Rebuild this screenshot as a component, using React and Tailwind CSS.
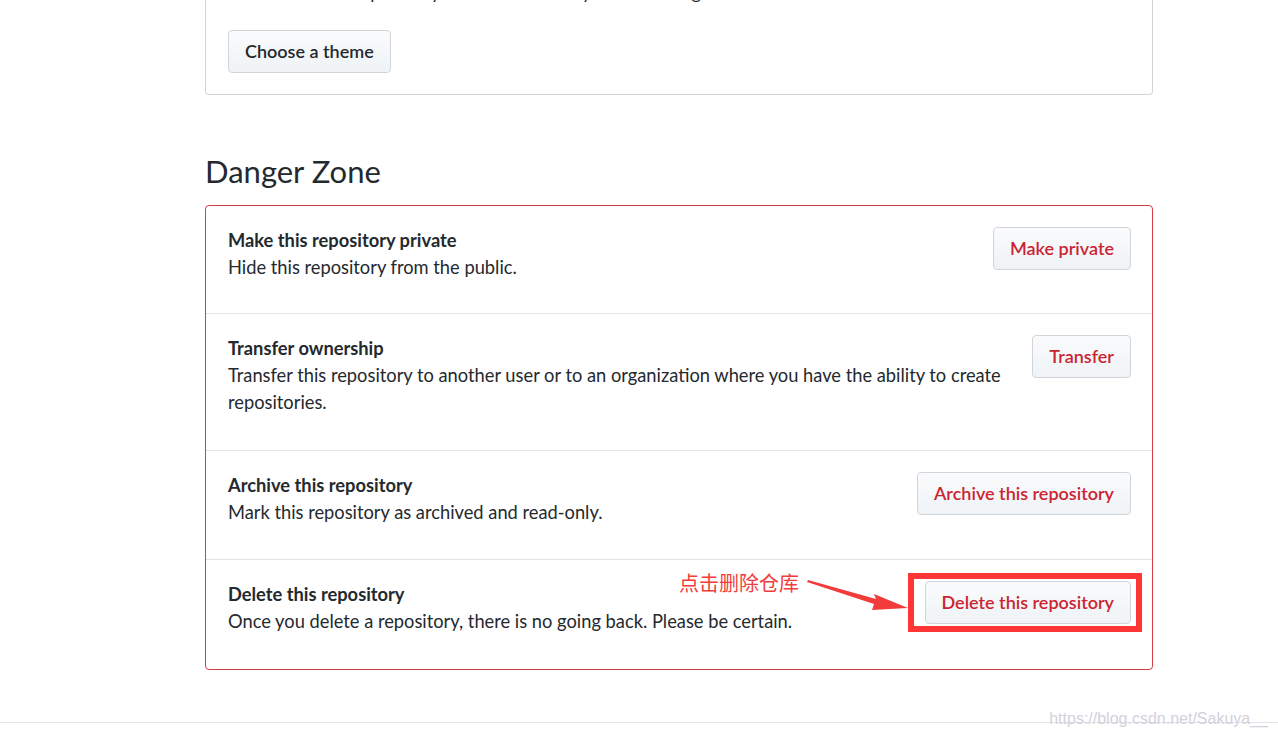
import React from "react";

const rows = [
  {
    title: "Make this repository private",
    desc: "Hide this repository from the public.",
    action: "Make private",
    pb: "pb-[32px]",
  },
  {
    title: "Transfer ownership",
    desc: "Transfer this repository to another user or to an organization where you have the ability to create repositories.",
    action: "Transfer",
    pb: "pb-[34px]",
  },
  {
    title: "Archive this repository",
    desc: "Mark this repository as archived and read-only.",
    action: "Archive this repository",
    pb: "pb-[33px]",
  },
  {
    title: "Delete this repository",
    desc: "Once you delete a repository, there is no going back. Please be certain.",
    action: "Delete this repository",
    pb: "pb-[34px]",
    marked: true,
  },
];

const btn =
  "h-[43px] shrink-0 rounded-[4px] border border-[#d1d5da] bg-gradient-to-b from-[#fafbfc] to-[#eff3f6] px-4 text-[18px] font-semibold";

const App = () => {
  return (
    <div
      className="relative min-h-[736px] overflow-hidden bg-white text-[#24292e]"
      style={{ fontFamily: "Lato, 'Noto Sans', sans-serif" }}
    >
      <div className="ml-[205px] w-[948px]">
        {/* GitHub Pages theme box (cut off at top) */}
        <div className="-mt-[21px] rounded-b-[4px] border border-t-0 border-[#d1d5da] px-[22px] pb-[21px]">
          <p className="text-[18px] leading-[27px] whitespace-nowrap">
            Select a theme to publish your site with a Jekyll theme using the master branch.
          </p>
          <button className={btn + " mt-[24px] text-[#24292e]"}>Choose a theme</button>
        </div>

        <h2 className="mt-[56px] mb-[14px] text-[31px] leading-[40px]">Danger Zone</h2>

        <div className="rounded-[4px] border border-[#d73a49]">
          {rows.map((r, i) => (
            <div
              key={r.title}
              className={
                "relative flex items-start justify-between gap-[24px] pl-[22px] pr-[21px] pt-[21px] " +
                r.pb +
                (i > 0 ? " border-t border-[#e1e4e8]" : "")
              }
            >
              <div className="min-w-0 flex-1 text-[18.3px] leading-[27px]">
                <div className="font-bold">{r.title}</div>
                <div>{r.desc}</div>
              </div>
              <button className={btn + " text-[#cb2431]"}>{r.action}</button>

              {r.marked && (
                <>
                  <div className="pointer-events-none absolute right-[10px] top-[13px] h-[59px] w-[234px] border-[6px] border-[#ff3636]" />
                  <div
                    className="absolute left-[473px] top-[10px] text-[20px] leading-[26px] text-[#f23c3c]"
                    style={{ fontFamily: "'Noto Sans CJK SC', sans-serif" }}
                  >
                    点击删除仓库
                  </div>
                  <svg
                    className="absolute left-[600px] top-[14px]"
                    width="104"
                    height="36"
                    viewBox="0 0 104 36"
                  >
                    <polygon
                      points="2,6 70,25 68,20 102,34 66,36 68,30 1,8"
                      fill="#f23c3c"
                    />
                  </svg>
                </>
              )}
            </div>
          ))}
        </div>
      </div>

      <div className="mt-[52px] border-t border-[#e1e4e8]" />

      <div
        className="absolute right-[10px] top-[709px] text-[16px] leading-[20px] text-[#d2d2da]"
        style={{ fontFamily: "'Liberation Sans', Arial, sans-serif" }}
      >
        https://blog.csdn.net/Sakuya__
      </div>
    </div>
  );
};

export default App;
